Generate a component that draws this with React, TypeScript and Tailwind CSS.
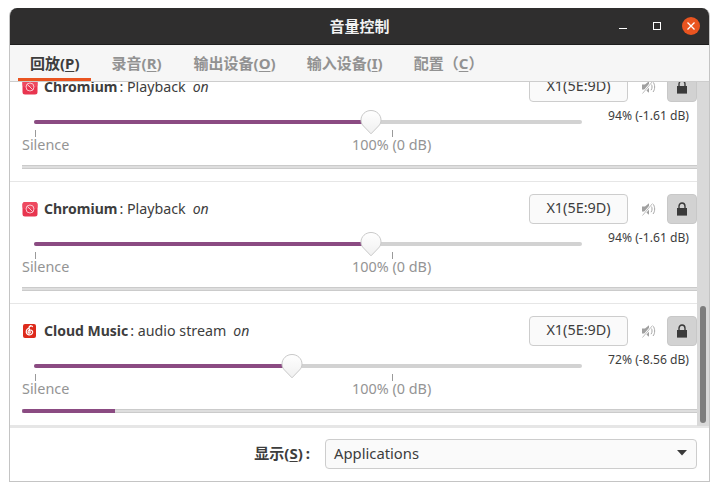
import React from "react";

const FONT = "font-['Noto_Sans','Noto_Sans_CJK_SC',sans-serif]";

function Mnemonic({ children }: { children: string }) {
  return <span className="underline underline-offset-2 decoration-1">{children}</span>;
}

function BlockedIcon() {
  return (
    <svg width="16" height="16" viewBox="0 0 16 16" className="shrink-0">
      <rect x="0.5" y="1" width="15" height="14.5" rx="2.5" fill="#e8354f" />
      <rect x="0.5" y="1" width="15" height="7" rx="2.5" fill="#ee4a60" />
      <circle cx="8" cy="8" r="4" fill="none" stroke="#f9c4cc" strokeWidth="1" />
      <path d="M5.2 5.2 L10.8 10.8" stroke="#f9c4cc" strokeWidth="1" />
    </svg>
  );
}

function CloudMusicIcon() {
  return (
    <svg width="16" height="16" viewBox="0 0 16 16" className="shrink-0">
      <rect x="1" y="1" width="13" height="14" rx="2" fill="#dd2a1b" />
      <path
        d="M8.6 2.9 C6.8 3.4 6.9 4.8 7.2 6 L8.2 9.2 C8.5 10.3 6.5 10.6 6.1 9.3 C5.7 8 7 7 8.4 7 C10 7 10.9 8.2 10.6 9.7 C10.2 11.4 8.4 12.2 6.8 11.8 C5 11.3 3.9 9.6 4.4 7.7 C4.7 6.6 5.4 5.9 6.2 5.5"
        fill="none"
        stroke="#ffffff"
        strokeWidth="1.2"
        strokeLinecap="round"
      />
      <path d="M8.6 2.9 C9.4 2.7 10.1 3 10.4 3.6" fill="none" stroke="#ffffff" strokeWidth="1.2" strokeLinecap="round" />
    </svg>
  );
}

function MuteIcon() {
  return (
    <svg width="16" height="16" viewBox="0 0 16 16">
      <path d="M1 5.5 H4 L8 2.2 V13.8 L4 10.5 H1 Z" fill="#a0a0a0" />
      <path d="M10 4.8 C11.4 6.5 11.4 9.5 10 11.2 M12 3 C14.2 5.6 14.2 10.4 12 13" fill="none" stroke="#a8a8a8" strokeWidth="1" />
      <path d="M1.5 14.5 L12 2" stroke="#ffffff" strokeWidth="2.4" />
      <path d="M1.5 14.5 L11.5 2.5" stroke="#b5b5b5" strokeWidth="0.9" />
    </svg>
  );
}

function LockIcon() {
  return (
    <svg width="12" height="14" viewBox="0 0 12 14">
      <path d="M3 6.5 V4.2 C3 2.4 4.2 1 6 1 C7.8 1 9 2.4 9 4.2 V6.5" fill="none" stroke="#3a3a3a" strokeWidth="1.4" />
      <rect x="1" y="6" width="10" height="7.6" fill="#3a3a3a" />
    </svg>
  );
}

function Thumb({ left }: { left: number }) {
  return (
    <svg
      width="24"
      height="28"
      viewBox="0 0 24 28"
      className="absolute top-[-11px]"
      style={{ left }}
    >
      <defs>
        <linearGradient id="thumbfill" x1="0" y1="0" x2="0" y2="1">
          <stop offset="0" stopColor="#ffffff" />
          <stop offset="1" stopColor="#f0f0f0" />
        </linearGradient>
      </defs>
      <path
        d="M12 1.5 C17.5 1.5 22 5.7 22 11 C22 13.8 20.9 15.6 19.5 17 L12 24.8 L4.5 17 C3.1 15.6 2 13.8 2 11 C2 5.7 6.5 1.5 12 1.5 Z"
        fill="url(#thumbfill)"
        stroke="#c9c9c9"
      />
    </svg>
  );
}

type RowProps = {
  icon: React.ReactNode;
  name: string;
  detail: string;
  fill: number;
  percent: string;
  meter: number;
  first?: boolean;
};

function Row({ icon, name, detail, fill, percent, meter, first }: RowProps) {
  return (
    <div className={`h-[122px] shrink-0 border-b border-[#e6e6e6] pl-3 pt-3 ${first ? "mt-[-22px]" : ""}`}>
      <div className="flex h-[30px] items-center">
        {icon}
        <div className="ml-1.5 mt-[-1px] flex items-baseline whitespace-nowrap text-[14px] text-[#3d3d3d]">
          <span className="font-bold">{name}</span>
          <span className="ml-[2px] text-[14.25px]">: {detail}</span>
          <span className="ml-[7px] italic">on</span>
        </div>
        <div className="ml-auto flex items-center">
          <div className="flex h-[30px] w-[99px] items-center justify-center rounded-[4px] border border-[#cdcdcd] bg-[#fafafa] pb-[2px] text-[14.4px] text-[#3d3d3d]">
            X1(5E:9D)
          </div>
          <div className="ml-[13px] mr-[10px] flex w-4 items-center justify-center">
            <MuteIcon />
          </div>
          <div className="flex h-[30px] w-[30px] items-center justify-center rounded-[4px] border border-[#c8c8c8] bg-[#d2d2d2]">
            <LockIcon />
          </div>
        </div>
      </div>
      <div className="mt-1.5 flex">
        <div className="w-[560px] shrink-0 pt-3">
          <div className="relative ml-3 h-1 rounded-full bg-[#d2d2d2]">
            <div className="h-1 rounded-l-full bg-[#8b4b82]" style={{ width: fill }} />
            <Thumb left={fill - 12} />
          </div>
          <div className="mt-1.5 flex h-[7px]">
            <div className="ml-[13px] h-[7px] w-px bg-[#9a9a9a]" />
            <div className="ml-[356px] h-[7px] w-px bg-[#9a9a9a]" />
          </div>
          <div className="flex h-4 items-center whitespace-nowrap text-[14.4px] leading-4 text-[#949494]">
            <span className="w-[330px]">Silence</span>
            <span>100% (0 dB)</span>
          </div>
        </div>
        <div className="flex-1 whitespace-nowrap pr-2 text-right text-[12.15px] leading-4 text-[#3d3d3d]">{percent}</div>
      </div>
      <div className="mt-3 h-1 border-y border-[#cbcbcb] bg-[#dedede]">
        <div className="-mt-px h-1 rounded-l-full bg-[#8b4b82]" style={{ width: meter }} />
      </div>
    </div>
  );
}

function Tab({ label, mn, tail = ")", open = "(", active, tight }: { label: string; mn: string; tail?: string; open?: string; active?: boolean; tight?: boolean }) {
  return (
    <div className={`relative flex h-[36px] items-center whitespace-nowrap text-[15px] font-bold ${active ? "text-[#3d3d3d]" : "text-[#929292]"} ${tight ? "mr-[-1px]" : ""}`}>
      <span>
        {label}
        {open}
        <Mnemonic>{mn}</Mnemonic>
        {tail}
      </span>
      {active && <div className="absolute bottom-0 left-[-12px] right-[-11px] h-[3px] bg-[#e95420]" />}
    </div>
  );
}

export default function App() {
  return (
    <div className={`h-[491px] w-[719px] overflow-hidden bg-white pl-[9px] pt-2 ${FONT}`}>
      <div className="flex h-[474px] w-[701px] flex-col overflow-hidden rounded-t-[8px] border-x border-b border-[#c4c4c4] bg-white">
        <div className="-mx-px relative flex h-[37px] shrink-0 items-center justify-center border-b border-[#1d1d1d] bg-[#2f2e2e]">
          <span className="text-[15px] font-bold text-[#f2f2f2]">音量控制</span>
          <div className="absolute right-[10px] top-0 flex h-[36px] items-center">
            <div className="mt-[4px] h-px w-[8px] bg-white" />
            <div className="ml-[26px] h-[8px] w-[8px] border border-white" />
            <div className="ml-[21px] flex h-[18px] w-[18px] items-center justify-center rounded-full bg-[#e95420]">
              <svg width="8" height="8" viewBox="0 0 8 8">
                <path d="M0.5 0.5 L7.5 7.5 M7.5 0.5 L0.5 7.5" stroke="#ffffff" strokeWidth="1.3" />
              </svg>
            </div>
          </div>
        </div>
        <div className="flex h-[37px] shrink-0 items-center gap-x-[32px] border-b border-[#cdcdcd] bg-[#f6f6f6] pl-5">
          <Tab label="回放" mn="P" active />
          <Tab label="录音" mn="R" />
          <Tab label="输出设备" mn="O" tight />
          <Tab label="输入设备" mn="I" tight />
          <Tab label="配置" mn="C" open="（" tail="）" />
        </div>
        <div className="flex h-[344px] shrink-0">
          <div className="flex w-[687px] shrink-0 flex-col overflow-hidden">
            <Row icon={<BlockedIcon />} name="Chromium" detail="Playback" fill={337} percent="94% (-1.61 dB)" meter={0} first />
            <Row icon={<BlockedIcon />} name="Chromium" detail="Playback" fill={337} percent="94% (-1.61 dB)" meter={0} />
            <Row icon={<CloudMusicIcon />} name="Cloud Music" detail="audio stream" fill={258} percent="72% (-8.56 dB)" meter={93} />
          </div>
          <div className="flex flex-1 flex-col justify-end bg-[#d9d9d9] pb-[3px] pl-[3px]">
            <div className="h-[117px] w-[6px] rounded-full bg-[#7d7d7d]" />
          </div>
        </div>
        <div className="flex h-[55px] shrink-0 items-start justify-end border-t-2 border-[#e6e6e6] pr-3 pt-[11px]">
          <div className="flex h-[28px] items-center whitespace-nowrap text-[15px] font-bold text-[#3d3d3d]">
            <span>显示(<Mnemonic>S</Mnemonic>)</span>
            <span className="ml-[3px]">:</span>
          </div>
          <div className="ml-[15px] flex h-[30px] w-[372px] items-center justify-between rounded-[4px] border border-[#cdcdcd] bg-[#fafafa] pb-[2px] pl-2 pr-[9px] text-[14.8px] text-[#3d3d3d]">
            <span>Applications</span>
            <svg width="10" height="6" viewBox="0 0 10 6">
              <path d="M0 0 H10 L5 5.5 Z" fill="#3a3a3a" />
            </svg>
          </div>
        </div>
      </div>
    </div>
  );
}
